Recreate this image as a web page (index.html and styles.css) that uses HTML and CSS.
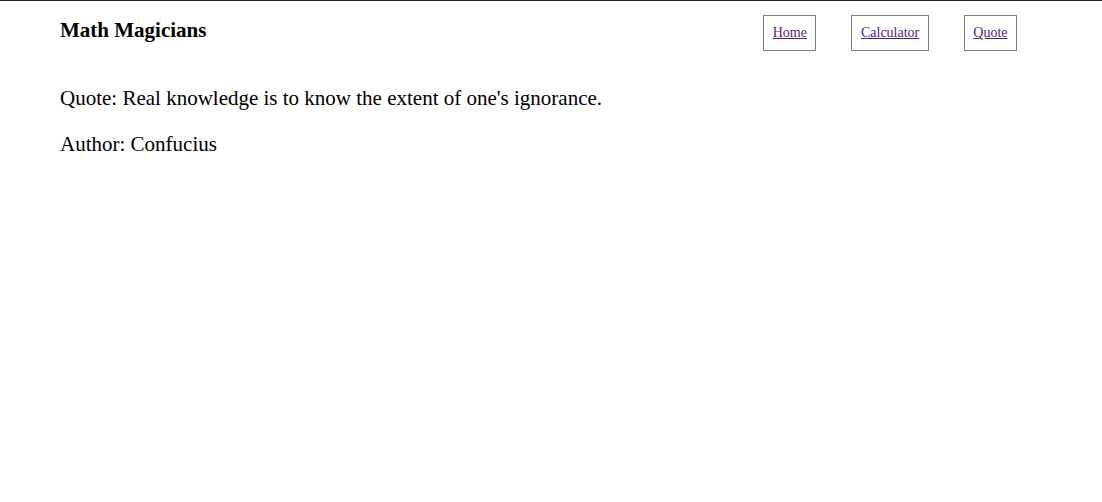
FILE: index.html
```html
<!DOCTYPE html>
<html lang="en">
<head>
<meta charset="utf-8">
<title>Math Magicians</title>
<link rel="stylesheet" href="styles.css">
</head>
<body>
<header class="header">
  <h1 class="logo">Math Magicians</h1>
  <nav>
    <ul class="nav-list">
      <li class="nav-item"><a class="nav-link" href="#">Home</a></li>
      <li class="nav-item"><a class="nav-link" href="#">Calculator</a></li>
      <li class="nav-item"><a class="nav-link" href="#">Quote</a></li>
    </ul>
  </nav>
</header>
<main class="quote">
  <p class="quote-text">Quote: Real knowledge is to know the extent of one's ignorance.</p>
  <p class="quote-text">Author: Confucius</p>
</main>
</body>
</html>
```

FILE: styles.css
```css
html, body {
  margin: 0;
  padding: 0;
  background: #fff;
}

body {
  border-top: 1px solid #222;
  font-family: "Liberation Serif", "Times New Roman", serif;
  color: #000;
}

.header {
  display: flex;
  justify-content: space-between;
  align-items: flex-start;
  padding: 0 85px 0 60px;
}

.logo {
  margin: 17px 0 0;
  font-size: 21px;
  font-weight: bold;
  line-height: normal;
}

.nav-list {
  display: flex;
  gap: 35px;
  list-style: none;
  margin: 14px 0 0;
  padding: 0;
}

.nav-item {
  border: 1px solid #808080;
  padding: 9px 8.5px;
  font-size: 14px;
  line-height: 16px;
}

.nav-link {
  color: #551a8b;
  text-decoration: underline;
}

.quote {
  padding: 14px 60px 0;
}

.quote-text {
  margin: 21px 0;
  font-size: 21px;
  line-height: normal;
}
```
